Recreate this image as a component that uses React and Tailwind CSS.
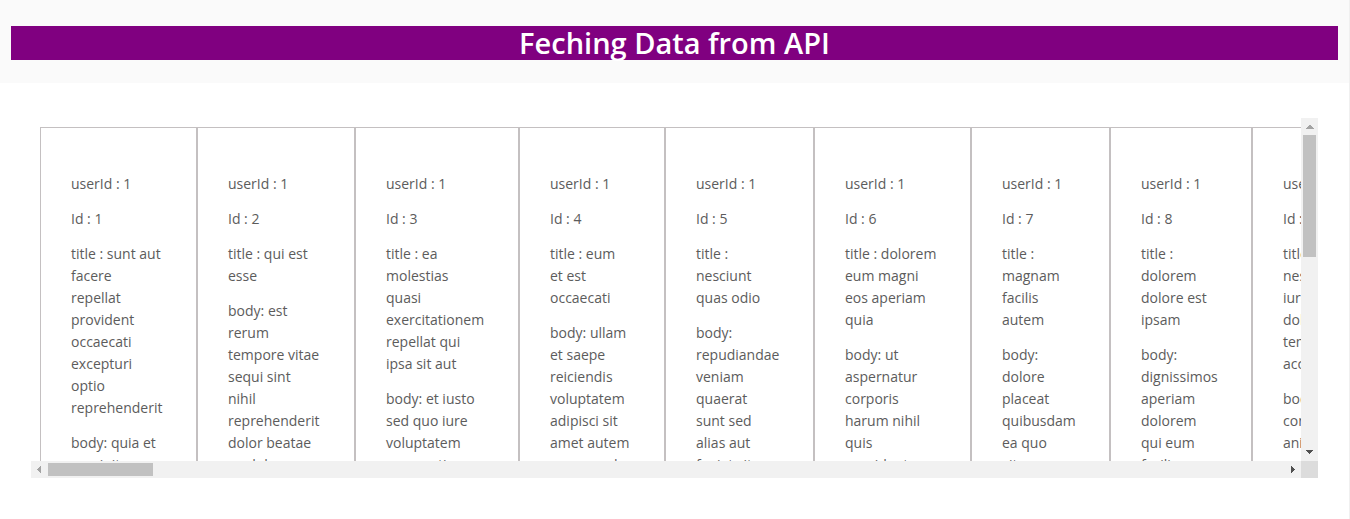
import React from "react";

const posts = [
  {
    userId: 1,
    id: 1,
    width: "w-[157px]",
    title: "sunt aut facere repellat provident occaecati excepturi optio reprehenderit",
    body: "quia et suscipit suscipit recusandae consequuntur",
  },
  {
    userId: 1,
    id: 2,
    width: "w-[158px]",
    title: "qui est esse",
    body: "est rerum tempore vitae sequi sint nihil reprehenderit dolor beatae ea dolores neque fugiat",
  },
  {
    userId: 1,
    id: 3,
    width: "w-[164px]",
    title: "ea molestias quasi exercitationem repellat qui ipsa sit aut",
    body: "et iusto sed quo iure voluptatem occaecati omnis eligendi aut ad",
  },
  {
    userId: 1,
    id: 4,
    width: "w-[146px]",
    title: "eum et est occaecati",
    body: "ullam et saepe reiciendis voluptatem adipisci sit amet autem assumenda provident rerum culpa quis hic commodi nesciunt rem tenetur doloremque",
  },
  {
    userId: 1,
    id: 5,
    width: "w-[149px]",
    title: "nesciunt quas odio",
    body: "repudiandae veniam quaerat sunt sed alias aut fugiat sit autem sed est",
  },
  {
    userId: 1,
    id: 6,
    width: "w-[157px]",
    title: "dolorem eum magni eos aperiam quia",
    body: "ut aspernatur corporis harum nihil quis provident sequi mollitia nobis aliquid molestiae perspiciatis et ea nemo ab reprehenderit",
  },
  {
    userId: 1,
    id: 7,
    width: "w-[139px]",
    title: "magnam facilis autem",
    body: "dolore placeat quibusdam ea quo vitae magni quis enim qui quis quo nemo aut saepe",
  },
  {
    userId: 1,
    id: 8,
    width: "w-[142px]",
    title: "dolorem dolore est ipsam",
    body: "dignissimos aperiam dolorem qui eum facilis quibusdam animi sint suscipit qui sint",
  },
  {
    userId: 1,
    id: 9,
    width: "w-[146px]",
    title: "nesciunt iure omnis dolorem tempora et accusantium",
    body: "consectetur animi nesciunt iure dolore enim quia ad",
  },
];

function PostCard({ post }) {
  return (
    <article
      className={`shrink-0 border border-[#c4c0c1] px-[30px] py-[45px] text-sm leading-[22px] ${post.width}`}
    >
      <div className="flex w-min flex-col gap-[13px]">
        <p className="whitespace-nowrap">{`userId : ${post.userId}`}</p>
        <p className="whitespace-nowrap">{`Id : ${post.id}`}</p>
        <p>{`title : ${post.title}`}</p>
        <p>{`body: ${post.body}`}</p>
      </div>
    </article>
  );
}

function ArrowButton({ label, points, color }) {
  return (
    <button type="button" aria-label={label} className="size-[17px] shrink-0">
      <svg viewBox="0 0 17 17" className="size-[17px]" shapeRendering="crispEdges">
        <polygon points={points} fill={color} />
      </svg>
    </button>
  );
}

export default function App() {
  return (
    <div className="min-h-screen border-r border-[#f0f0f0] bg-white font-['Open_Sans',sans-serif] text-[#5c5c5c]">
      <header className="bg-[#fafafa] pt-[26px] pr-[11px] pb-[23px] pl-[11px]">
        <h1 className="bg-[#800080] text-center text-[29px] leading-[34px] font-semibold text-white">
          Feching Data from API
        </h1>
      </header>

      <main className="px-[31px] py-[35px]">
        <div className="grid grid-cols-[minmax(0,1fr)_17px] grid-rows-[343px_17px]">
          <section
            aria-label="Posts"
            className="overflow-auto p-[9px] [scrollbar-width:none]"
          >
            <div className="flex w-max">
              {posts.map((post) => (
                <PostCard key={post.id} post={post} />
              ))}
            </div>
          </section>

          <div className="flex flex-col bg-[#f1f1f1]">
            <ArrowButton label="Scroll up" points="4,11 8,7 9,7 13,11" color="#a3a3a3" />
            <div className="flex-1 px-[2px]">
              <div className="h-[122px] bg-[#c1c1c1]" />
            </div>
            <ArrowButton label="Scroll down" points="5,6 12,6 9,10 8,10" color="#505050" />
          </div>

          <div className="flex bg-[#f1f1f1]">
            <ArrowButton label="Scroll left" points="10,5 10,12 6,9 6,8" color="#a3a3a3" />
            <div className="flex-1 py-[2px]">
              <div className="h-[13px] w-[105px] bg-[#c1c1c1]" />
            </div>
            <ArrowButton label="Scroll right" points="7,5 7,12 11,9 11,8" color="#505050" />
          </div>

          <div className="bg-[#dcdcdc]" />
        </div>
      </main>
    </div>
  );
}
